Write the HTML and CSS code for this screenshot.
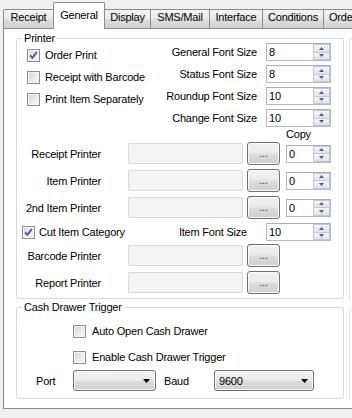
FILE: index.html
```html
<!DOCTYPE html>
<html>
<head>
<meta charset="utf-8">
<link rel="stylesheet" href="styles.css">
</head>
<body>
<div class="tabs">
  <div class="tab w-receipt">Receipt</div>
  <div class="tab sel w-general">General</div>
  <div class="tab w-display">Display</div>
  <div class="tab w-sms">SMS/Mail</div>
  <div class="tab w-interface">Interface</div>
  <div class="tab w-cond">Conditions</div>
  <div class="tab w-order">Order</div>
</div>
<div class="panel">
  <div class="col-main">
    <fieldset class="group printer">
      <legend>Printer</legend>
      <div class="top">
        <div class="checks">
          <div class="chk"><span class="box"><svg width="11" height="11" viewBox="0 0 11 11"><path d="M2.2 5.4 L4.4 7.8 L8.8 2.2" fill="none" stroke="#4a5d95" stroke-width="1.9"/></svg></span>Order Print</div>
          <div class="chk"><span class="box"></span>Receipt with Barcode</div>
          <div class="chk"><span class="box"></span>Print Item Separately</div>
        </div>
        <div class="sizes">
          <div class="srow"><span class="lbl">General Font Size</span><div class="spin"><span class="val">8</span><span class="sbtns"><span class="sb"><svg width="5" height="3" viewBox="0 0 5 3"><path d="M0 3 L2.5 0 L5 3Z" fill="#4d5f8f"/></svg></span><span class="sb"><svg width="5" height="3" viewBox="0 0 5 3"><path d="M0 0 L2.5 3 L5 0Z" fill="#4d5f8f"/></svg></span></span></div></div>
          <div class="srow"><span class="lbl">Status Font Size</span><div class="spin"><span class="val">8</span><span class="sbtns"><span class="sb"><svg width="5" height="3" viewBox="0 0 5 3"><path d="M0 3 L2.5 0 L5 3Z" fill="#4d5f8f"/></svg></span><span class="sb"><svg width="5" height="3" viewBox="0 0 5 3"><path d="M0 0 L2.5 3 L5 0Z" fill="#4d5f8f"/></svg></span></span></div></div>
          <div class="srow"><span class="lbl">Roundup Font Size</span><div class="spin"><span class="val">10</span><span class="sbtns"><span class="sb"><svg width="5" height="3" viewBox="0 0 5 3"><path d="M0 3 L2.5 0 L5 3Z" fill="#4d5f8f"/></svg></span><span class="sb"><svg width="5" height="3" viewBox="0 0 5 3"><path d="M0 0 L2.5 3 L5 0Z" fill="#4d5f8f"/></svg></span></span></div></div>
          <div class="srow"><span class="lbl">Change Font Size</span><div class="spin"><span class="val">10</span><span class="sbtns"><span class="sb"><svg width="5" height="3" viewBox="0 0 5 3"><path d="M0 3 L2.5 0 L5 3Z" fill="#4d5f8f"/></svg></span><span class="sb"><svg width="5" height="3" viewBox="0 0 5 3"><path d="M0 0 L2.5 3 L5 0Z" fill="#4d5f8f"/></svg></span></span></div></div>
        </div>
      </div>
      <div class="copy-row">Copy</div>
      <div class="prow first">
        <span class="plabel">Receipt Printer</span><span class="pbox"></span><span class="btn">...</span>
        <div class="spin small"><span class="val">0</span><span class="sbtns"><span class="sb"><svg width="5" height="3" viewBox="0 0 5 3"><path d="M0 3 L2.5 0 L5 3Z" fill="#4d5f8f"/></svg></span><span class="sb"><svg width="5" height="3" viewBox="0 0 5 3"><path d="M0 0 L2.5 3 L5 0Z" fill="#4d5f8f"/></svg></span></span></div>
      </div>
      <div class="prow">
        <span class="plabel">Item Printer</span><span class="pbox"></span><span class="btn">...</span>
        <div class="spin small"><span class="val">0</span><span class="sbtns"><span class="sb"><svg width="5" height="3" viewBox="0 0 5 3"><path d="M0 3 L2.5 0 L5 3Z" fill="#4d5f8f"/></svg></span><span class="sb"><svg width="5" height="3" viewBox="0 0 5 3"><path d="M0 0 L2.5 3 L5 0Z" fill="#4d5f8f"/></svg></span></span></div>
      </div>
      <div class="prow">
        <span class="plabel">2nd Item Printer</span><span class="pbox"></span><span class="btn">...</span>
        <div class="spin small"><span class="val">0</span><span class="sbtns"><span class="sb"><svg width="5" height="3" viewBox="0 0 5 3"><path d="M0 3 L2.5 0 L5 3Z" fill="#4d5f8f"/></svg></span><span class="sb"><svg width="5" height="3" viewBox="0 0 5 3"><path d="M0 0 L2.5 3 L5 0Z" fill="#4d5f8f"/></svg></span></span></div>
      </div>
      <div class="cut">
        <div class="chk"><span class="box"><svg width="11" height="11" viewBox="0 0 11 11"><path d="M2.2 5.4 L4.4 7.8 L8.8 2.2" fill="none" stroke="#4a5d95" stroke-width="1.9"/></svg></span>Cut Item Category</div>
        <span class="lbl">Item Font Size</span>
        <div class="spin"><span class="val">10</span><span class="sbtns"><span class="sb"><svg width="5" height="3" viewBox="0 0 5 3"><path d="M0 3 L2.5 0 L5 3Z" fill="#4d5f8f"/></svg></span><span class="sb"><svg width="5" height="3" viewBox="0 0 5 3"><path d="M0 0 L2.5 3 L5 0Z" fill="#4d5f8f"/></svg></span></span></div>
      </div>
      <div class="prow after-cut">
        <span class="plabel">Barcode Printer</span><span class="pbox"></span><span class="btn">...</span>
      </div>
      <div class="prow">
        <span class="plabel">Report Printer</span><span class="pbox"></span><span class="btn">...</span>
      </div>
    </fieldset>
    <fieldset class="group cash">
      <legend>Cash Drawer Trigger</legend>
      <div class="crow"><span class="box"></span>Auto Open Cash Drawer</div>
      <div class="crow"><span class="box"></span>Enable Cash Drawer Trigger</div>
      <div class="port">
        <span class="l1">Port</span>
        <div class="combo c-port"><span class="cval"></span><svg class="carrow" width="7" height="4" viewBox="0 0 7 4"><path d="M0 0 L7 0 L3.5 4Z" fill="#000"/></svg></div>
        <span class="l2">Baud</span>
        <div class="combo c-baud"><span class="cval">9600</span><svg class="carrow" width="7" height="4" viewBox="0 0 7 4"><path d="M0 0 L7 0 L3.5 4Z" fill="#000"/></svg></div>
      </div>
    </fieldset>
  </div>
  <div class="col-side">
    <div class="side s1"></div>
    <div class="side s2"></div>
  </div>
</div>
</body>
</html>
```
FILE: styles.css
```css
html, body {
  margin: 0;
  padding: 0;
}
body {
  width: 352px;
  height: 418px;
  overflow: hidden;
  background: #f0f0f0;
  font-family: "Liberation Sans", Arial, sans-serif;
  font-size: 11px;
  letter-spacing: -0.2px;
  color: #000;
}
.tabs {
  display: flex;
  align-items: flex-end;
  height: 28px;
  padding-left: 3px;
  box-sizing: border-box;
}
.tab {
  flex: none;
  box-sizing: border-box;
  height: 19px;
  line-height: 15px;
  border: 1px solid #898c95;
  border-bottom: none;
  margin-left: -1px;
  background: linear-gradient(#f3f3f3, #ebebeb 45%, #dddddd 55%, #d1d1d1);
  text-align: center;
  white-space: nowrap;
  overflow: hidden;
}
.tab:first-child {
  margin-left: 0;
  border-top-left-radius: 2px;
}
.tab.sel {
  height: 27px;
  line-height: 25px;
  background: #fff;
  margin-bottom: -1px;
  position: relative;
  z-index: 1;
  border-radius: 2px 2px 0 0;
}
.w-receipt { width: 51px; }
.w-general { width: 52px; }
.w-display { width: 47px; }
.w-sms { width: 60px; }
.w-interface { width: 54px; }
.w-cond { width: 62px; }
.w-order { width: 50px; text-align: left; padding-left: 5px; }

.panel {
  box-sizing: border-box;
  width: 380px;
  height: 381px;
  margin-left: 3px;
  border: 1px solid #898c95;
  background: #fff;
  display: flex;
  padding-left: 12px;
}
.col-main {
  width: 328px;
  flex: none;
}
.group {
  margin: 0;
  padding: 0;
  min-width: 0;
  border: 1px solid #d5dbe0;
  border-radius: 3px;
}
.group legend {
  padding: 0 2px;
  margin-left: 5px;
  line-height: 10px;
  font-size: 11px;
}
.printer {
  margin-top: 4px;
  padding-bottom: 4px;
}
.cash {
  margin-top: 3px;
  padding-top: 10px;
  padding-bottom: 7px;
}

.top {
  display: flex;
  height: 84px;
}
.checks {
  display: flex;
  flex-direction: column;
  gap: 4px;
  padding: 3px 0 0 10px;
}
.chk {
  display: flex;
  align-items: center;
  height: 18px;
  white-space: nowrap;
}
.box {
  flex: none;
  box-sizing: border-box;
  width: 13px;
  height: 13px;
  margin-right: 5px;
  border: 1px solid #8e8f8f;
  background: linear-gradient(135deg, #cfd3d8 0%, #eceef0 60%, #f8f8f8 100%);
  box-shadow: inset 0 0 0 1px #f4f4f4;
  display: flex;
  align-items: center;
  justify-content: center;
}
.box svg { display: block; }
.sizes {
  margin-left: auto;
  margin-right: 12px;
  display: flex;
  flex-direction: column;
  gap: 4px;
}
.srow {
  display: flex;
  align-items: center;
  justify-content: flex-end;
  height: 18px;
}
.lbl {
  margin-right: 9px;
  white-space: nowrap;
}
.spin {
  flex: none;
  box-sizing: border-box;
  width: 65px;
  height: 18px;
  border: 1px solid #b4b8c0;
  border-top-color: #abadb3;
  background: #fff;
  display: flex;
  align-items: center;
  padding-left: 2px;
}
.val {
  line-height: 16px;
}
.sbtns {
  margin-left: auto;
  width: 17px;
  height: 16px;
  display: flex;
  flex-direction: column;
}
.sb {
  flex: 1;
  box-sizing: border-box;
  border: 1px solid #c3c8d2;
  background: linear-gradient(#f3f5f9, #dde2ec);
  display: flex;
  align-items: center;
  justify-content: center;
}
.sb + .sb { border-top: none; }
.sb svg { display: block; }

.copy-row {
  height: 15px;
  line-height: 15px;
  padding-left: 269px;
}
.prow {
  display: flex;
  align-items: center;
  height: 23px;
  margin-top: 4px;
}
.prow.first { margin-top: 0; }
.prow.after-cut { margin-top: 3px; }
.plabel {
  flex: none;
  width: 84px;
  text-align: right;
  white-space: nowrap;
}
.pbox {
  flex: none;
  box-sizing: border-box;
  width: 115px;
  height: 21px;
  margin-left: 27px;
  border: 1px solid #d9d9d9;
  border-radius: 2px;
  background: #f4f4f4;
}
.btn {
  flex: none;
  box-sizing: border-box;
  width: 33px;
  height: 23px;
  margin-left: 4px;
  border: 1px solid #707070;
  border-radius: 3px;
  background: linear-gradient(#f2f2f2, #ebebeb 48%, #dddddd 52%, #cfcfcf);
  box-shadow: inset 0 0 0 1px #fbfbfb;
  text-align: center;
  line-height: 21px;
  color: #333;
}
.spin.small {
  width: 45px;
  margin-left: 6px;
}
.cut {
  display: flex;
  align-items: center;
  height: 18px;
  margin-top: 4px;
  padding-left: 5px;
}
.cut .box { margin-right: 4px; }
.cut .lbl {
  margin-left: auto;
  margin-right: 19px;
}
.cut .spin { margin-right: 12px; }

.crow {
  display: flex;
  align-items: center;
  height: 18px;
  padding-left: 56px;
  white-space: nowrap;
}
.crow .box { margin-right: 6px; }
.crow + .crow { margin-top: 8px; }
.port {
  display: flex;
  align-items: center;
  height: 21px;
  margin-top: 4px;
  padding-left: 19px;
}
.l1 { width: 37px; flex: none; }
.l2 { width: 50px; flex: none; margin-left: 8px; }
.combo {
  flex: none;
  box-sizing: border-box;
  height: 21px;
  border: 1px solid #707070;
  border-radius: 3px;
  background: linear-gradient(#f2f2f2, #ebebeb 48%, #dddddd 52%, #cfcfcf);
  box-shadow: inset 0 0 0 1px #fbfbfb;
  display: flex;
  align-items: center;
  padding-left: 4px;
}
.c-port { width: 83px; }
.c-baud { width: 100px; }
.carrow {
  display: block;
  margin-left: auto;
  margin-right: 5px;
}

.col-side {
  margin-left: 5px;
  width: 30px;
  flex: none;
}
.side {
  box-sizing: border-box;
  border-left: 1px solid #dfe3e6;
  border-top: 1px solid #dfe3e6;
  border-top-left-radius: 3px;
}
.s1 {
  margin-top: 9px;
  height: 262px;
}
.s2 {
  margin-top: 8px;
  height: 92px;
}
```
